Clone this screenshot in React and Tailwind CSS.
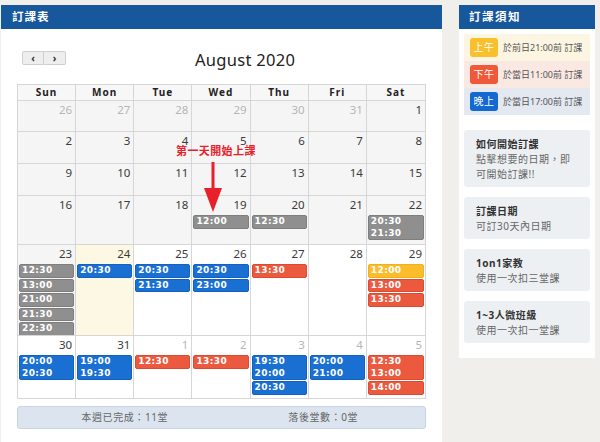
import React from 'react';

// event colours
const EV = {
  gray: 'bg-[#8f8f8f] border-[#7e7e7e]',
  blue: 'bg-[#1a6fd3] border-[#1461c0]',
  red: 'bg-[#eb5a3f] border-[#dc4a2f]',
  yellow: 'bg-[#fbbd2b] border-[#f2b01b]',
};

const DAYS = ['Sun', 'Mon', 'Tue', 'Wed', 'Thu', 'Fri', 'Sat'];

const WEEKS = [
  {
    h: 'h-[31px]',
    days: [
      { n: 26, out: true, bg: 'past' },
      { n: 27, out: true, bg: 'past' },
      { n: 28, out: true, bg: 'past' },
      { n: 29, out: true, bg: 'past' },
      { n: 30, out: true, bg: 'past' },
      { n: 31, out: true, bg: 'past' },
      { n: 1, bg: 'past' },
    ],
  },
  {
    h: 'h-[32px]',
    days: [2, 3, 4, 5, 6, 7, 8].map((n) => ({ n, bg: 'past' })),
  },
  {
    h: 'h-[32px]',
    days: [9, 10, 11, 12, 13, 14, 15].map((n) => ({ n, bg: 'past' })),
  },
  {
    h: 'h-[49px]',
    days: [
      { n: 16, bg: 'past' },
      { n: 17, bg: 'past' },
      { n: 18, bg: 'past' },
      { n: 19, bg: 'past', ev: [{ c: 'gray', t: ['12:00'] }] },
      { n: 20, bg: 'past', ev: [{ c: 'gray', t: ['12:30'] }] },
      { n: 21, bg: 'past' },
      { n: 22, bg: 'past', ev: [{ c: 'gray', t: ['20:30', '21:30'] }] },
    ],
  },
  {
    h: 'h-[91px]',
    days: [
      {
        n: 23,
        bg: 'past',
        ev: [
          { c: 'gray', t: ['12:30'] },
          { c: 'gray', t: ['13:00'] },
          { c: 'gray', t: ['21:00'] },
          { c: 'gray', t: ['21:30'] },
          { c: 'gray', t: ['22:30'] },
        ],
      },
      { n: 24, bg: 'today', ev: [{ c: 'blue', t: ['20:30'] }] },
      { n: 25, ev: [{ c: 'blue', t: ['20:30'] }, { c: 'blue', t: ['21:30'] }] },
      { n: 26, ev: [{ c: 'blue', t: ['20:30'] }, { c: 'blue', t: ['23:00'] }] },
      { n: 27, ev: [{ c: 'red', t: ['13:30'] }] },
      { n: 28 },
      {
        n: 29,
        ev: [
          { c: 'yellow', t: ['12:00'] },
          { c: 'red', t: ['13:00'] },
          { c: 'red', t: ['13:30'] },
        ],
      },
    ],
  },
  {
    h: 'h-[63px]',
    days: [
      { n: 30, ev: [{ c: 'blue', t: ['20:00', '20:30'] }] },
      { n: 31, ev: [{ c: 'blue', t: ['19:00', '19:30'] }] },
      { n: 1, out: true, ev: [{ c: 'red', t: ['12:30'] }] },
      { n: 2, out: true, ev: [{ c: 'red', t: ['13:30'] }] },
      { n: 3, out: true, ev: [{ c: 'blue', t: ['19:30', '20:00'] }, { c: 'blue', t: ['20:30'] }] },
      { n: 4, out: true, ev: [{ c: 'blue', t: ['20:00', '21:00'] }] },
      { n: 5, out: true, ev: [{ c: 'red', t: ['12:30', '13:00'] }, { c: 'red', t: ['14:00'] }] },
    ],
  },
];

const NOTICES = [
  { label: '上午', badge: 'bg-[#f9c02c]', row: 'bg-[#fcf5e1]', text: '於前日21:00前 訂課' },
  { label: '下午', badge: 'bg-[#ee5a39]', row: 'bg-[#fae8e3]', text: '於當日11:00前 訂課' },
  { label: '晚上', badge: 'bg-[#1368d1]', row: 'bg-[#e3e8f1]', text: '於當日17:00前 訂課' },
];

const CARDS = [
  { title: '如何開始訂課', body: '點擊想要的日期，即可開始訂課!!' },
  { title: '訂課日期', body: '可訂30天內日期' },
  { title: '1on1家教', body: '使用一次扣三堂課' },
  { title: '1~3人微班級', body: '使用一次扣一堂課' },
];

function DayCell({ day, last }) {
  const bg = day.bg === 'past' ? 'bg-[#f5f5f5]' : day.bg === 'today' ? 'bg-[#fcf8e3]' : 'bg-white';
  return (
    <div className={`${bg} ${last ? '' : 'border-r'} border-[#d6d6d6] overflow-hidden`}>
      <div
        className={`h-[19px] pt-[2px] pr-[3px] text-right text-[11.5px] leading-[14px] ${
          day.out ? 'text-[#b5b5b5]' : 'text-[#3a3a3a]'
        }`}
      >
        {day.n}
      </div>
      {(day.ev || []).map((e, i) => (
        <div
          key={i}
          className={`${EV[e.c]} mx-[1px] mb-[1px] rounded-[2px] border px-[2px] text-white font-bold text-[9px] leading-[11.5px] tracking-[0.4px] font-['DejaVu_Sans',sans-serif]`}
        >
          {e.t.map((t) => (
            <div key={t}>{t}</div>
          ))}
        </div>
      ))}
    </div>
  );
}

export default function App() {
  return (
    <div className="w-[600px] min-h-[442px] bg-[#f0efeb] flex items-start pt-[5px] font-['Noto_Sans','Noto_Sans_CJK_TC',sans-serif]">
      {/* left: calendar */}
      <div className="relative ml-[1px] w-[441px] min-h-[437px] bg-white">
        <div className="h-[24px] bg-[#17579c] flex items-center pl-[11px] text-white font-bold text-[11.5px] tracking-[1px]">
          訂課表
        </div>
        <div className="px-[16px]">
          <div className="h-[55px] flex items-center pt-[3px]">
            <div className="ml-[5px] flex">
              <button className="w-[22px] h-[14px] flex items-center justify-center bg-[#eeeeee] border border-[#cfcfcf] rounded-l-[2px] text-[10px] font-bold leading-none text-[#333]">
                ‹
              </button>
              <button className="w-[22px] h-[14px] flex items-center justify-center bg-[#eeeeee] border border-l-0 border-[#cfcfcf] rounded-r-[2px] text-[10px] font-bold leading-none text-[#333]">
                ›
              </button>
            </div>
            <div className="ml-[129px] mt-[3px] text-[16.5px] leading-[24px] tracking-[0.3px] text-[#222]">
              August 2020
            </div>
          </div>

          <div className="w-[409px] border-t border-l border-r border-[#d6d6d6]">
            <div className="grid grid-cols-7 h-[16px] border-b border-[#d6d6d6] bg-[#f7f7f7]">
              {DAYS.map((d, i) => (
                <div
                  key={d}
                  className={`${i < 6 ? 'border-r' : ''} border-[#d6d6d6] text-center text-[10px] leading-[15px] font-bold tracking-[1px] text-[#222]`}
                >
                  {d}
                </div>
              ))}
            </div>
            {WEEKS.map((w, wi) => (
              <div key={wi} className={`grid grid-cols-7 ${w.h} border-b border-[#d6d6d6]`}>
                {w.days.map((day, di) => (
                  <DayCell key={di} day={day} last={di === 6} />
                ))}
              </div>
            ))}
          </div>

          <div className="mt-[7px] h-[23px] grid grid-cols-2 items-center rounded-[3px] border border-[#c9d5e2] bg-[#dce5ef] text-[10px] tracking-[0.6px] text-[#666]">
            <div className="text-center pl-[10px]">本週已完成：11堂</div>
            <div className="text-center">落後堂數：0堂</div>
          </div>
        </div>

        {/* annotation */}
        <div className="absolute left-[175px] top-[139px] text-[11px] leading-[14px] font-bold text-[#e8202a] tracking-[0.4px]">
          第一天開始上課
        </div>
        <svg className="absolute left-[203px] top-[157px]" width="18" height="51" viewBox="0 0 18 51">
          <rect x="7.5" y="0" width="3" height="30" fill="#e8202a" />
          <polygon points="0,26 18,26 9,50" fill="#e8202a" />
        </svg>
      </div>

      {/* right: notes */}
      <div className="ml-[17px] w-[136px]">
        <div className="h-[24px] bg-[#17579c] flex items-center pl-[10px] text-white font-bold text-[11.5px] tracking-[1.5px]">
          訂課須知
        </div>
        <div className="bg-white p-[5px] pb-[15px]">
          <div>
            {NOTICES.map((n) => (
              <div key={n.label} className={`${n.row} h-[27px] flex items-center pl-[6px]`}>
                <div
                  className={`${n.badge} w-[28px] h-[19px] rounded-[3px] flex items-center justify-center text-white text-[10px] tracking-[0.5px]`}
                >
                  {n.label}
                </div>
                <div className="ml-[5px] text-[9px] text-[#555] whitespace-nowrap">{n.text}</div>
              </div>
            ))}
          </div>
          <div className="mt-[15px] flex flex-col gap-[10px]">
            {CARDS.map((c) => (
              <div key={c.title} className="rounded-[3px] bg-[#edf0f3] px-[12px] pt-[7px] pb-[5px] text-[10px] leading-[15px] tracking-[0.5px]">
                <div className="font-bold text-[#333]">{c.title}</div>
                <div className="text-[#666]">{c.body}</div>
              </div>
            ))}
          </div>
        </div>
      </div>
    </div>
  );
}
